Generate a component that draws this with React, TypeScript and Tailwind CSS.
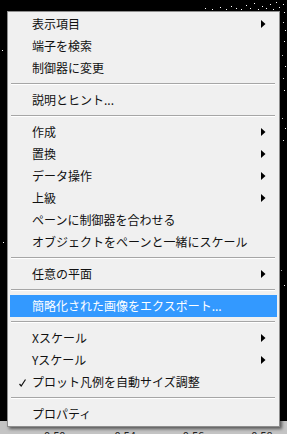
import React from "react";

type Item =
  | { kind: "item"; label: string; sub?: boolean; check?: boolean; active?: boolean }
  | { kind: "sep" };

const items: Item[] = [
  { kind: "item", label: "表示項目", sub: true },
  { kind: "item", label: "端子を検索" },
  { kind: "item", label: "制御器に変更" },
  { kind: "sep" },
  { kind: "item", label: "説明とヒント..." },
  { kind: "sep" },
  { kind: "item", label: "作成", sub: true },
  { kind: "item", label: "置換", sub: true },
  { kind: "item", label: "データ操作", sub: true },
  { kind: "item", label: "上級", sub: true },
  { kind: "item", label: "ペーンに制御器を合わせる" },
  { kind: "item", label: "オブジェクトをペーンと一緒にスケール" },
  { kind: "sep" },
  { kind: "item", label: "任意の平面", sub: true },
  { kind: "sep" },
  { kind: "item", label: "簡略化された画像をエクスポート...", active: true },
  { kind: "sep" },
  { kind: "item", label: "Xスケール", sub: true },
  { kind: "item", label: "Yスケール", sub: true },
  { kind: "item", label: "プロット凡例を自動サイズ調整", check: true },
  { kind: "sep" },
  { kind: "item", label: "プロパティ" },
];

const dots: [number, number][] = [
  [205, 8], [212, 9], [220, 7], [226, 9], [231, 6], [236, 8], [241, 9], [246, 5], [250, 8],
  [254, 3], [258, 9], [262, 6], [266, 8], [270, 4], [273, 9], [276, 2], [279, 7], [283, 4],
  [284, 12], [283, 22], [285, 30], [284, 41], [282, 55], [285, 66], [283, 78], [284, 90],
  [282, 118], [285, 128], [283, 140], [2, 50], [3, 242], [281, 270], [284, 285],
];

export default function App() {
  return (
    <div
      className="relative w-[287px] h-[434px] overflow-hidden bg-black"
      style={{ fontFamily: '"Noto Sans CJK JP", "Noto Sans", sans-serif' }}
    >
      <svg className="absolute left-0 top-0" width="287" height="434">
        {dots.map(([x, y], i) => (
          <rect key={i} x={x} y={y} width="1" height="1" fill="#ffffff" />
        ))}
      </svg>

      <div className="absolute left-0 top-[421px] w-[287px] h-[13px] bg-[#c4c4c4]">
        <div className="relative flex text-[11px] leading-none text-[#222] pt-[9px]">
          <span className="ml-[44px]">0.50</span>
          <span className="ml-[49px]">0.54</span>
          <span className="ml-[47px]">0.56</span>
          <span className="ml-[47px]">0.58</span>
        </div>
      </div>

      <div className="absolute left-[7px] top-[11px] w-[273px] border border-[#8e8e8e] bg-[#f0f0f0] py-[1px] shadow-[2px_2px_3px_rgba(0,0,0,0.55)]">
        {items.map((it, i) =>
          it.kind === "sep" ? (
            <div key={i} className="h-[10px] flex flex-col justify-center pl-[3px] pr-[4px]">
              <div className="h-[1px] bg-[#a6a6a6]" />
              <div className="h-[1px] bg-white" />
            </div>
          ) : (
            <div
              key={i}
              className={
                "relative mx-[2px] h-[22px] flex items-center pl-[22px] text-[12px] " +
                (it.active ? "bg-[#3399ff] text-white" : "text-[#111]")
              }
            >
              {it.check && (
                <svg className="absolute left-[9px] top-[8px]" width="7" height="8" viewBox="0 0 7 8">
                  <path d="M0.5 5 L2.2 7 L6.5 0.5" fill="none" stroke="#111" strokeWidth="1.2" />
                </svg>
              )}
              <span className="whitespace-nowrap leading-none">{it.label}</span>
              {it.sub && (
                <svg className="absolute right-[11px] top-[7px]" width="5" height="8" viewBox="0 0 5 8">
                  <polygon points="0,0 4.5,4 0,8" fill="#000" />
                </svg>
              )}
            </div>
          )
        )}
      </div>
    </div>
  );
}
